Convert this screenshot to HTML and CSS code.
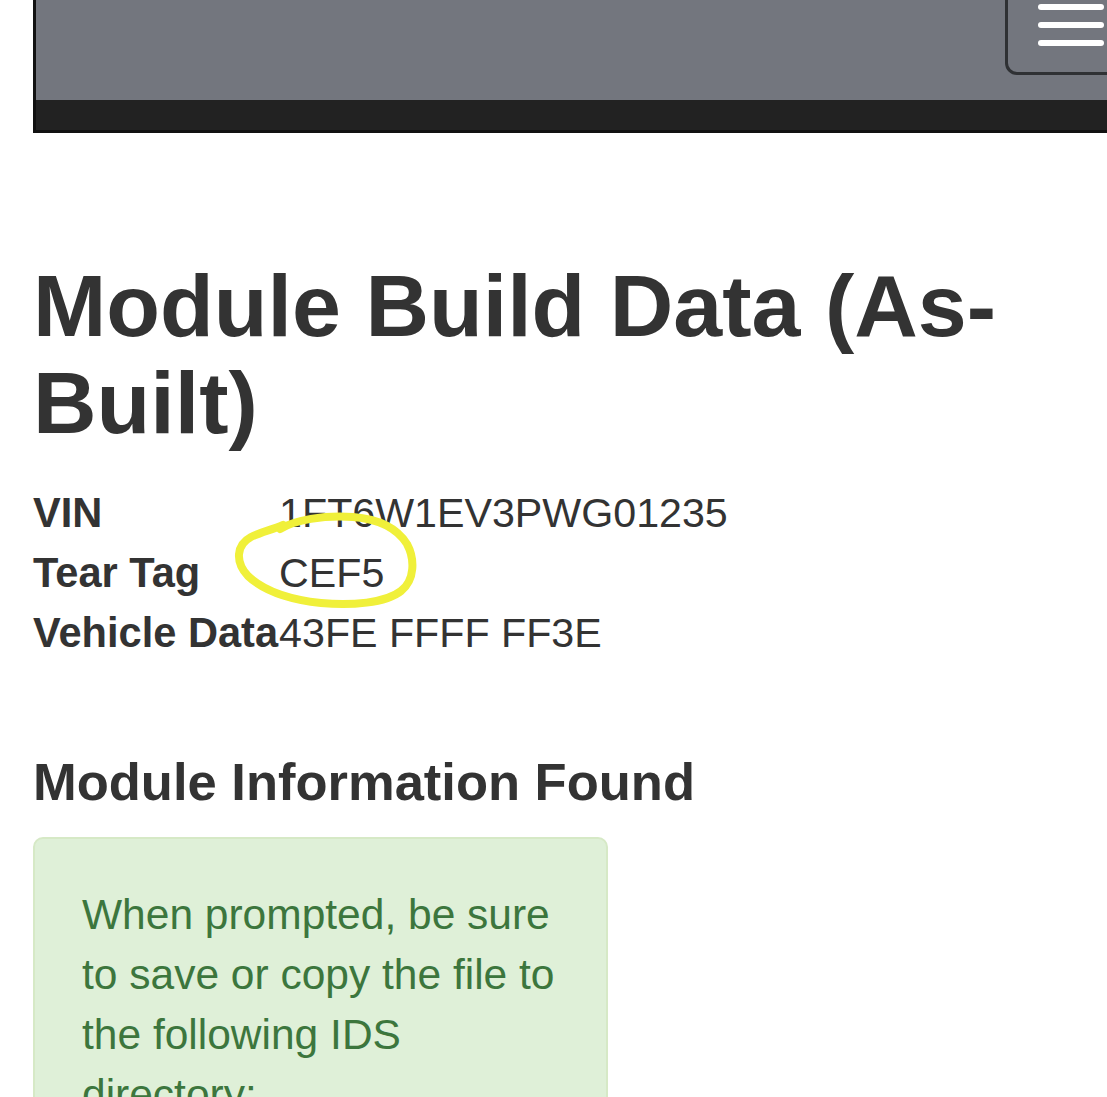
FILE: index.html
```html
<!DOCTYPE html>
<html lang="en">
<head>
<meta charset="utf-8">
<title>Module Build Data (As-Built)</title>
<link rel="stylesheet" href="styles.css">
</head>
<body>
<header class="navbar">
  <div class="navbar-top">
    <button class="navbar-toggle" type="button" aria-label="Toggle navigation">
      <span class="icon-bar"></span>
      <span class="icon-bar"></span>
      <span class="icon-bar"></span>
    </button>
  </div>
  <div class="navbar-strip"></div>
</header>

<main class="container">
  <h1 class="page-title">Module Build Data (As-Built)</h1>

  <div class="vehicle-info">
    <table class="info-table">
      <tr><th>VIN</th><td>1FT6W1EV3PWG01235</td></tr>
      <tr><th>Tear Tag</th><td>CEF5</td></tr>
      <tr><th>Vehicle Data</th><td>43FE FFFF FF3E</td></tr>
    </table>
    <svg class="annotation" width="240" height="140" viewBox="0 0 240 140" aria-hidden="true">
      <path d="M57 46 C72 37 100 32 130 34 C155 36 174 45 184 61 C192 76 192 97 178 108 C163 120 128 123 98 120 C70 117 42 109 25 93 C12 79 13 62 28 54 C38 49 48 47 60 42" fill="none" stroke="#f0f03a" stroke-width="8" stroke-linecap="round" stroke-linejoin="round"/>
    </svg>
  </div>

  <h3 class="section-title">Module Information Found</h3>

  <div class="alert alert-success">
    <p>When prompted, be sure to save or copy the file to the following IDS directory:</p>
  </div>
</main>
</body>
</html>
```

FILE: styles.css
```css
html, body {
  margin: 0;
  padding: 0;
  overflow: hidden;
  background: #ffffff;
}

body {
  font-family: "Liberation Sans", Arial, Helvetica, sans-serif;
  color: #333333;
}

.navbar {
  margin-left: 33px;
  border-left: 3px solid #111111;
  border-bottom: 3px solid #111111;
}

.navbar-top {
  height: 100px;
  background: #73767e;
  display: flex;
  justify-content: flex-end;
  align-items: flex-start;
  overflow: hidden;
}

.navbar-strip {
  height: 30px;
  background: #222222;
}

.navbar-toggle {
  box-sizing: border-box;
  width: 120px;
  height: 95px;
  margin-top: -20px;
  margin-right: -18px;
  padding: 21px 0 0 30px;
  border: 3px solid #2f3134;
  border-radius: 12px;
  background: transparent;
  display: flex;
  flex-direction: column;
  align-items: flex-start;
  gap: 12px;
}

.icon-bar {
  display: block;
  width: 66px;
  height: 6px;
  border-radius: 3px;
  background: #ffffff;
}

.container {
  padding-left: 33px;
}

.page-title {
  margin: 125px 0 0 0;
  font-size: 88px;
  font-weight: 700;
  line-height: 1.1;
  color: #333333;
}

.vehicle-info {
  position: relative;
  margin-top: 31px;
}

.info-table {
  border-collapse: collapse;
  font-size: 41px;
  line-height: 60px;
}

.info-table th,
.info-table td {
  padding: 0;
  text-align: left;
  vertical-align: top;
  white-space: nowrap;
}

.info-table th {
  font-size: 41.6px;
  font-weight: 700;
  padding-right: 1px;
}

.info-table td {
  font-size: 41.2px;
  font-weight: 400;
}

.annotation {
  position: absolute;
  left: 190px;
  top: 0;
  overflow: visible;
}

.section-title {
  margin: 90px 0 0 0;
  font-size: 52.5px;
  font-weight: 700;
  line-height: 1.1;
  color: #333333;
}

.alert {
  box-sizing: border-box;
  width: 575px;
  margin-top: 27px;
  padding: 46px 47px;
  border: 2px solid #d6e9c6;
  border-radius: 10px;
}

.alert-success {
  background: #dff0d8;
  color: #3c763d;
}

.alert p {
  margin: 0;
  font-size: 42.5px;
  line-height: 60px;
}
```
